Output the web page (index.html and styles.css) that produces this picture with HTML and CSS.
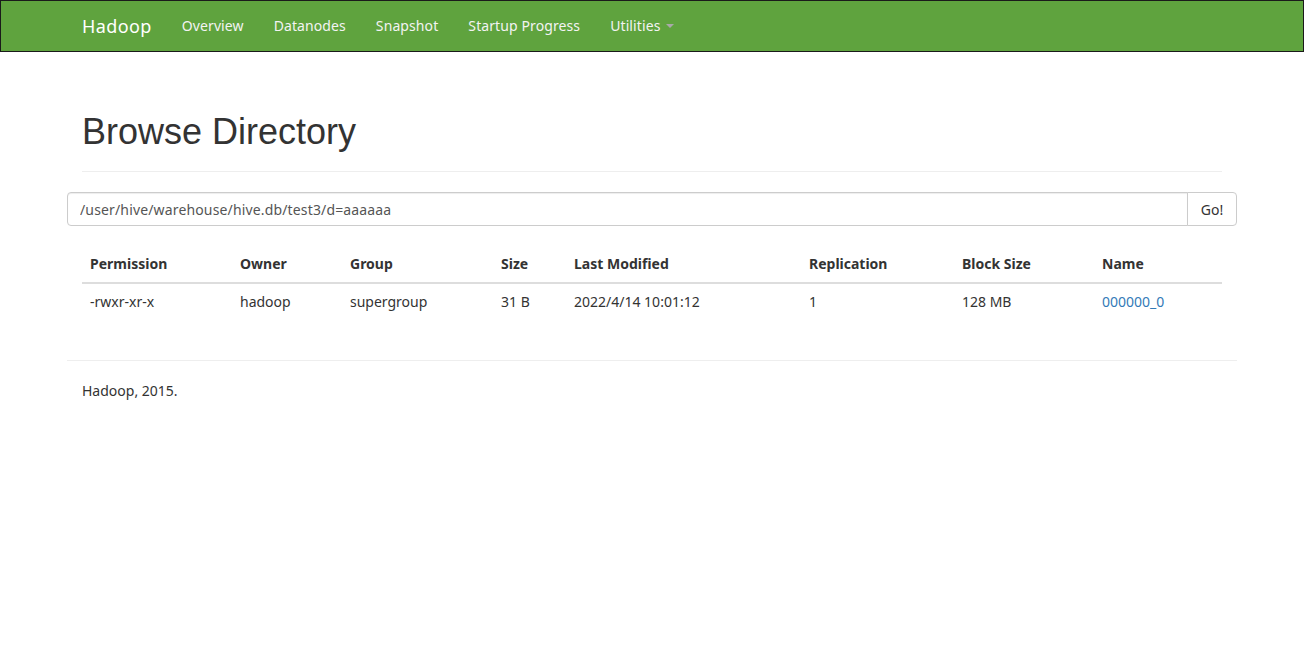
FILE: index.html
```html
<!DOCTYPE html>
<html>
<head>
<meta charset="utf-8">
<title>Browsing HDFS</title>
<link rel="stylesheet" href="styles.css">
</head>
<body>
<header class="navbar">
  <div class="nav-inner">
    <span class="brand">Hadoop</span>
    <ul class="nav-links">
      <li><span class="nav-link">Overview</span></li>
      <li><span class="nav-link">Datanodes</span></li>
      <li><span class="nav-link">Snapshot</span></li>
      <li><span class="nav-link">Startup Progress</span></li>
      <li><span class="nav-link">Utilities <span class="caret"></span></span></li>
    </ul>
  </div>
</header>
<main class="container">
  <div class="padded">
    <div class="page-header">
      <h1>Browse Directory</h1>
    </div>
  </div>
  <form class="input-group" onsubmit="return false;">
    <input class="path-input" type="text" value="/user/hive/warehouse/hive.db/test3/d=aaaaaa">
    <button class="go-btn" type="button">Go!</button>
  </form>
  <div class="padded">
    <table class="table">
      <thead>
        <tr>
          <th class="c1">Permission</th>
          <th class="c2">Owner</th>
          <th class="c3">Group</th>
          <th class="c4">Size</th>
          <th class="c5">Last Modified</th>
          <th class="c6">Replication</th>
          <th class="c7">Block Size</th>
          <th class="c8">Name</th>
        </tr>
      </thead>
      <tbody>
        <tr>
          <td>-rwxr-xr-x</td>
          <td>hadoop</td>
          <td>supergroup</td>
          <td>31 B</td>
          <td>2022/4/14 10:01:12</td>
          <td>1</td>
          <td>128 MB</td>
          <td><a class="link" href="#">000000_0</a></td>
        </tr>
      </tbody>
    </table>
  </div>
  <hr class="footer-rule">
  <div class="padded">
    <p class="footer-text">Hadoop, 2015.</p>
  </div>
</main>
</body>
</html>
```
FILE: styles.css
```css
* { box-sizing: border-box; }
html, body { margin: 0; padding: 0; }
body {
  font-family: "Noto Sans", "Liberation Sans", sans-serif;
  font-size: 14px;
  line-height: 20px;
  color: #333;
  background: #fff;
}
.navbar {
  height: 52px;
  background: #5fa33e;
  border: 1px solid #1a1a1a;
}
.nav-inner {
  width: 1170px;
  margin: 0 auto;
  padding: 0 15px;
  display: flex;
  align-items: center;
  height: 50px;
}
.brand {
  font-size: 18px;
  color: #fff;
  line-height: 20px;
  padding-right: 15px;
  letter-spacing: 0.4px;
}
.nav-links {
  list-style: none;
  margin: 0;
  padding: 0;
  display: flex;
}
.nav-link {
  display: flex;
  align-items: center;
  padding: 15px 15px;
  color: #f3f3f3;
  font-size: 14px;
  line-height: 20px;
  letter-spacing: 0.1px;
}
.caret {
  display: inline-block;
  width: 0;
  height: 0;
  margin-left: 6px;
  border-top: 4px solid #a9a9a9;
  border-left: 4px solid transparent;
  border-right: 4px solid transparent;
}
.container {
  width: 1170px;
  margin: 0 auto;
}
.padded { padding: 0 15px; }
.page-header {
  margin: 60px 0 20px;
  padding-bottom: 9px;
  border-bottom: 1px solid #eee;
}
.page-header h1 {
  margin: 0 0 10px;
  font-family: "Liberation Sans", Arial, sans-serif;
  font-size: 36px;
  font-weight: 400;
  line-height: 40px;
  color: #333;
}
.input-group {
  display: flex;
  margin: 0 0 20px;
  height: 34px;
}
.path-input {
  flex: 1;
  height: 34px;
  padding: 6px 12px;
  font-family: inherit;
  font-size: 14px;
  letter-spacing: 0.15px;
  color: #555;
  border: 1px solid #ccc;
  border-radius: 4px 0 0 4px;
  box-shadow: inset 0 1px 1px rgba(0,0,0,.075);
  outline: none;
}
.go-btn {
  height: 34px;
  width: 50px;
  margin-left: -1px;
  padding: 6px 12px;
  font-family: inherit;
  font-size: 14px;
  color: #333;
  background: #fff;
  border: 1px solid #ccc;
  border-radius: 0 4px 4px 0;
}
.table {
  width: 100%;
  border-collapse: collapse;
  border-spacing: 0;
  margin-bottom: 39px;
  table-layout: fixed;
}
.table th, .table td {
  padding: 8px;
  text-align: left;
  line-height: 20px;
  vertical-align: top;
}
.table th {
  font-weight: 700;
  border-bottom: 2px solid #ddd;
}
.table td { padding-bottom: 9px; }
.c1 { width: 150px; }
.c2 { width: 110px; }
.c3 { width: 151px; }
.c4 { width: 73px; }
.c5 { width: 235px; }
.c6 { width: 153px; }
.c7 { width: 140px; }
.c8 { width: 128px; }
.link { color: #337ab7; text-decoration: none; }
.footer-rule {
  margin: 20px 0;
  border: 0;
  border-top: 1px solid #eee;
}
.footer-text { margin: 0 0 10px; }
```
